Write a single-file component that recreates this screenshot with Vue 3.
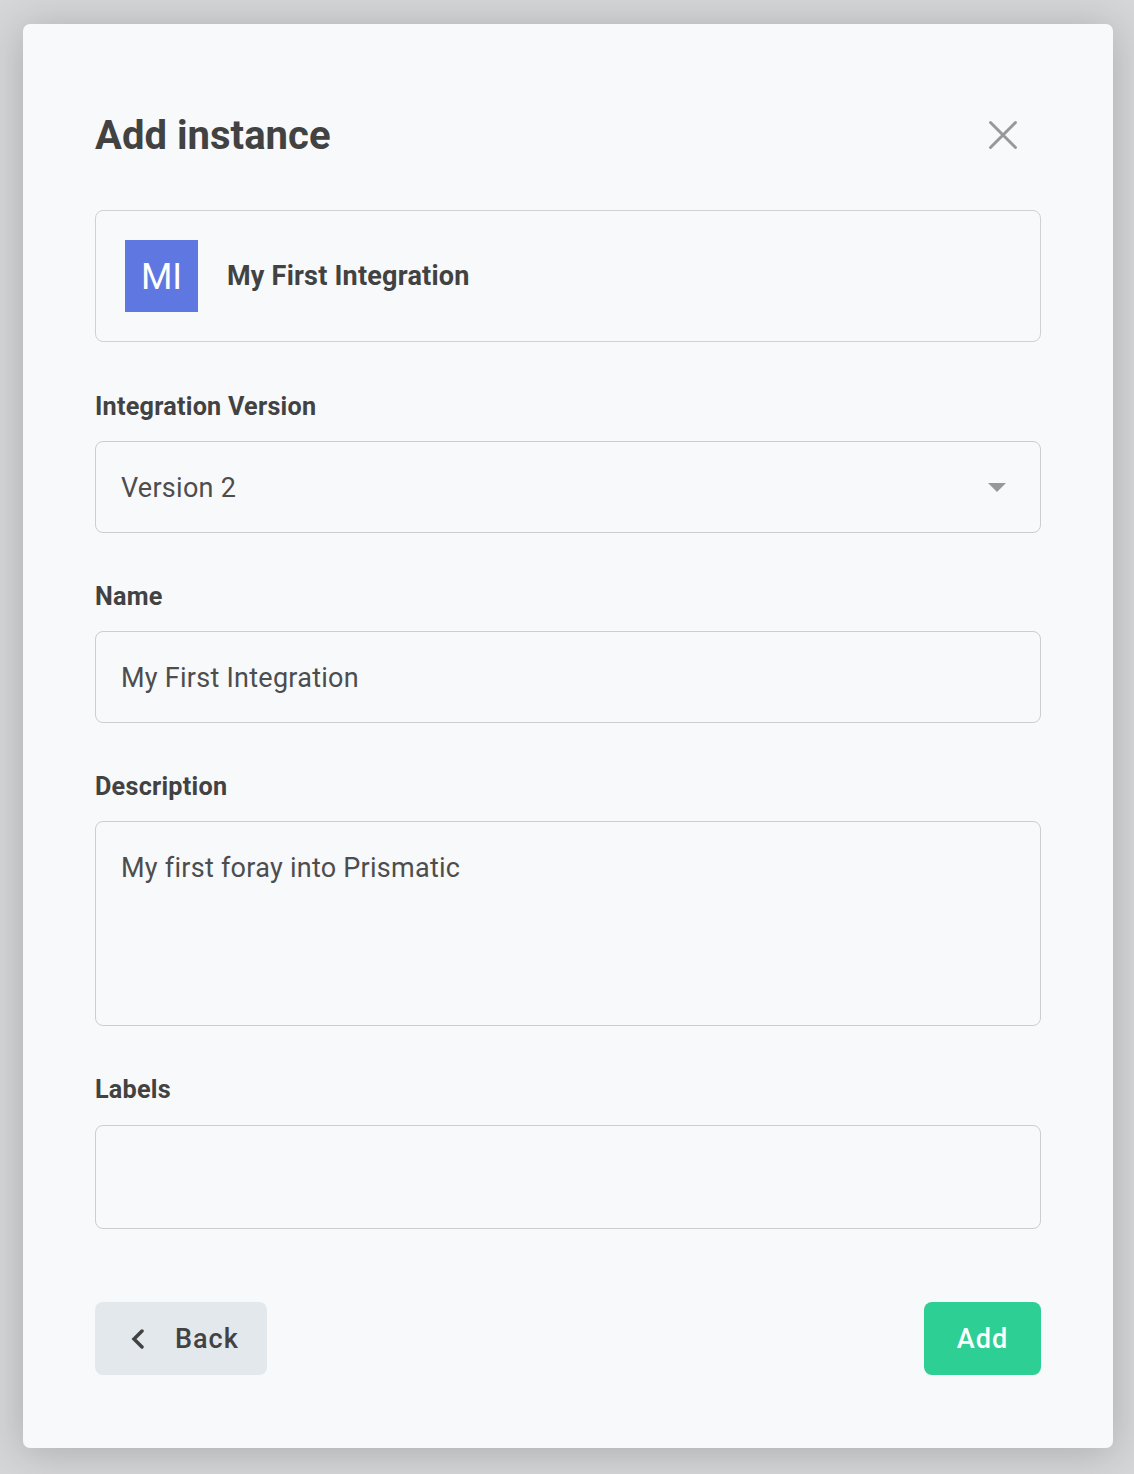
<script setup>
const title = 'Add instance'
</script>

<template>
  <div class="page">
    <section class="dialog">
      <header class="head">
        <h1>{{ title }}</h1>
        <svg class="close" width="30" height="30" viewBox="0 0 30 30"><path d="M2.5 2.5L27.5 27.5M27.5 2.5L2.5 27.5" /></svg>
      </header>
      <div class="card">
        <div class="avatar">MI</div>
        <div class="card-name">My First Integration</div>
      </div>
      <label class="version-label">Integration Version</label>
      <div class="field">
        <span>Version 2</span>
        <svg class="caret" width="18" height="9" viewBox="0 0 18 9"><path d="M0 0H18L9 9Z" /></svg>
      </div>
      <label>Name</label>
      <div class="field"><span>My First Integration</span></div>
      <label>Description</label>
      <div class="field area"><span>My first foray into Prismatic</span></div>
      <label class="tags-label">Labels</label>
      <div class="field tags"></div>
      <footer class="foot">
        <button class="back">
          <svg width="14" height="20" viewBox="0 0 14 20"><path d="M11 2L3 10L11 18" /></svg>
          <span>Back</span>
        </button>
        <button class="add">Add</button>
      </footer>
    </section>
  </div>
</template>

<style>
body { margin: 0; }
</style>

<style scoped>
* { box-sizing: border-box; }
.page { height: 1474px; padding: 24px 21px 26px 23px; overflow: hidden; background: #d5d6d8; font-family: Roboto, sans-serif; color: #424242; }
.dialog { height: 1424px; padding: 84px 72px 0; background: #f7f9fb; border-radius: 7px; box-shadow: 0 4px 42px rgba(0, 5, 0, .2); }
.head { height: 54px; display: flex; align-items: center; justify-content: space-between; padding-right: 23px; }
h1 { margin: 0; padding-top: 2px; font-size: 40px; line-height: 54px; font-weight: 700; letter-spacing: .03px; }
.close { fill: none; stroke: #979899; stroke-width: 3; stroke-linecap: round; }
.card { height: 132px; margin-top: 48px; padding-left: 29px; display: flex; align-items: center; border: 1px solid #cfd1d4; border-radius: 8px; }
.avatar { width: 73px; height: 72px; background: #5e77e1; color: #fff; font-size: 36px; line-height: 74px; text-align: center; }
.card-name { margin-left: 29px; font-size: 27px; font-weight: 700; letter-spacing: .22px; }
label { display: block; height: 36px; margin: 46px 0 16px; font-size: 25.2px; line-height: 36px; font-weight: 700; letter-spacing: .24px; }
.version-label { margin-top: 47px; }
.tags-label { margin-bottom: 17px; }
.field { height: 92px; padding: 2px 25px 0; display: flex; align-items: center; justify-content: space-between; border: 1px solid #cccdd0; border-radius: 8px; color: #4d4d4e; font-size: 27px; letter-spacing: .26px; }
.caret { margin: -2px 9px 0 0; fill: #979899; }
.area { height: 205px; align-items: flex-start; padding-top: 30px; line-height: 32px; }
.tags { height: 104px; }
.foot { margin-top: 73px; display: flex; justify-content: space-between; }
button { height: 73px; padding: 0; border: 0; border-radius: 8px; font: 500 27px Roboto, sans-serif; letter-spacing: 1px; }
.back { width: 172px; display: flex; align-items: center; padding-left: 36px; background: #e2e8ec; color: #424242; }
.back svg { margin-right: 30px; fill: none; stroke: #424242; stroke-width: 3.5; stroke-linecap: round; }
.add { width: 117px; background: #2dcf94; color: #fff; }
</style>
